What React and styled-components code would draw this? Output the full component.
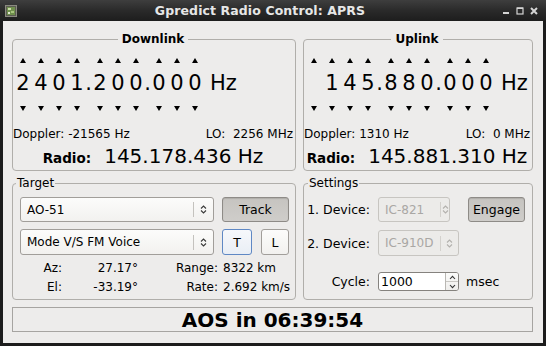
import React from 'react';
import styled, { createGlobalStyle } from 'styled-components';

const GlobalStyle = createGlobalStyle`
  html, body { margin: 0; padding: 0; background: #1c1c1c; }
  body { font-family: "DejaVu Sans", "Noto Sans", sans-serif; font-size: 12px; color: #000; }
`;

const Window = styled.div`
  width: 546px;
  height: 346px;
  display: flex;
  flex-direction: column;
  background: #1c1c1c;
`;

const TitleBar = styled.div`
  height: 21px;
  flex: none;
  display: flex;
  align-items: center;
  background: linear-gradient(#3e3e3e 0%, #2a2a2a 50%, #1d1d1d 100%);
  color: #e6e6e6;
`;

const AppIcon = styled.svg`
  flex: none;
  margin: 0 3px 0 5px;
`;

const Title = styled.div`
  flex: 1;
  text-align: center;
  font-weight: bold;
  font-size: 12.5px;
  letter-spacing: 0.1px;
`;

const WinButtons = styled.div`
  display: flex;
  align-items: center;
  gap: 6px;
  padding: 0 8px 0 2px;
`;

const Client = styled.div`
  flex: 1;
  margin: 0 3px 3px;
  background: #edeceb;
  display: grid;
  grid-template-columns: 284px 230px;
  grid-template-rows: 140px 125px 28px;
  column-gap: 7px;
  row-gap: 4px;
  padding: 10px 10px 0 9px;
`;

const Frame = styled.fieldset`
  margin: 0;
  min-width: 0;
  box-sizing: border-box;
  border: 1px solid #b0aeaa;
  border-radius: 4px;
  padding: 0 ${p => p.$pr}px 0 ${p => p.$pl}px;
  display: flex;
  flex-direction: column;
`;

const Legend = styled.legend`
  line-height: 16px;
  font-size: 12px;
  padding: 0 ${p => (p.$center ? 4 : 1)}px;
  font-weight: ${p => (p.$center ? 'bold' : 'normal')};
  margin: ${p => (p.$center ? '0 auto' : `0 0 0 ${p.$ml}px`)};
`;

/* frequency knob */
const KnobRow = styled.div`
  display: flex;
  align-items: flex-start;
  margin: 8px 0 0 1px;
`;

const DigitCol = styled.div`
  width: 18px;
  display: flex;
  flex-direction: column;
  align-items: center;
`;

const ArrowBox = styled.div`
  height: 10px;
  display: flex;
  align-items: center;
  justify-content: center;
  margin-top: ${p => p.$mt || 0}px;
`;

const Tri = styled.span`
  width: 0;
  height: 0;
  border-left: 3px solid transparent;
  border-right: 3px solid transparent;
  ${p => (p.$down ? 'border-top' : 'border-bottom')}: 5px solid #000;
`;

const Digit = styled.div`
  font-size: 21px;
  line-height: 26px;
  height: 26px;
  margin-top: 5px;
`;

const Dot = styled.div`
  width: 5px;
  display: flex;
  justify-content: center;
  font-size: 21px;
  line-height: 26px;
  margin-top: 15px;
`;

const Unit = styled.div`
  font-size: 21px;
  line-height: 26px;
  margin: 15px 0 0 6px;
`;

const InfoLine = styled.div`
  display: flex;
  justify-content: space-between;
  line-height: 16px;
  margin-top: 13px;
`;

const RadioLine = styled.div`
  display: flex;
  justify-content: center;
  align-items: baseline;
  gap: 13px;
  height: 24px;
  line-height: 24px;
  margin-top: 2px;
`;

const RadioLabel = styled.span`
  font-weight: bold;
  font-size: 13.5px;
`;

const RadioValue = styled.span`
  font-size: 20px;
`;

/* target */
const Controls = styled.div`
  display: grid;
  grid-template-columns: ${p => p.$cols};
  grid-template-rows: 25px 26px;
  column-gap: ${p => p.$gap}px;
  row-gap: 7px;
  margin-top: 6px;
  align-items: center;
`;

const ComboBox = styled.div`
  height: ${p => p.$h || 25}px;
  width: ${p => (p.$w ? `${p.$w}px` : 'auto')};
  box-sizing: border-box;
  border: 1px solid ${p => (p.$off ? '#c7c5c1' : '#a19e9a')};
  border-radius: 3px;
  background: ${p => (p.$off ? '#ecebe9' : 'linear-gradient(#fcfcfb, #f2f1ef)')};
  color: ${p => (p.$off ? '#a9a7a4' : '#000')};
  display: grid;
  grid-template-columns: ${p => p.$text}px 1px 1fr;
  align-items: center;
  overflow: hidden;
`;

const ComboText = styled.span`
  padding-left: 6px;
  white-space: nowrap;
  overflow: hidden;
`;

const ComboSep = styled.span`
  height: 15px;
  background: ${p => (p.$off ? '#d3d1cd' : '#c4c2be')};
`;

const ChevronCell = styled.span`
  display: flex;
  justify-content: center;
`;

const Button = styled.div`
  height: ${p => p.$h || 25}px;
  width: ${p => (p.$w ? `${p.$w}px` : 'auto')};
  box-sizing: border-box;
  border-radius: 3px;
  display: flex;
  align-items: center;
  justify-content: center;
  border: 1px solid ${p => (p.$active ? '#8e8b87' : p.$focus ? '#5f88c4' : '#a19e9a')};
  background: ${p =>
    p.$active
      ? 'linear-gradient(#c6c4c0, #cfcdca)'
      : p.$focus
      ? 'linear-gradient(#f6f8fb, #e9eef5)'
      : 'linear-gradient(#fcfcfb, #f2f1ef)'};
  box-shadow: ${p => (p.$active ? 'inset 0 1px 1px rgba(0,0,0,0.12)' : 'none')};
  font-size: 12.5px;
`;

const ToggleRow = styled.div`
  display: flex;
  gap: 9px;
`;

const Readout = styled.div`
  display: grid;
  grid-template-columns: 42px 76px 80px auto;
  grid-auto-rows: 19px;
  align-items: center;
  margin-top: 3px;
  font-size: 12px;
`;

const Cell = styled.span`
  text-align: ${p => (p.$left ? 'left' : 'right')};
  padding-left: ${p => (p.$left ? 5 : 0)}px;
  white-space: nowrap;
`;

/* settings */
const SetRow = styled.div`
  display: grid;
  grid-template-columns: 65px auto;
  column-gap: 8px;
  align-items: center;
  height: ${p => p.$h}px;
  margin-top: ${p => p.$mt}px;
`;

const SetLabel = styled.span`
  text-align: right;
  white-space: nowrap;
  font-size: 12.5px;
`;

const Inline = styled.div`
  display: flex;
  align-items: center;
  gap: ${p => p.$gap}px;
`;

const Spin = styled.div`
  width: 81px;
  height: 19px;
  box-sizing: border-box;
  border: 1px solid #85827e;
  border-radius: 3px;
  background: #fff;
  display: flex;
  overflow: hidden;
`;

const SpinText = styled.span`
  flex: 1;
  padding-left: 2px;
  line-height: 17px;
  font-size: 12.5px;
`;

const SpinButtons = styled.div`
  width: 12px;
  border-left: 1px solid #b9b7b3;
  display: flex;
  flex-direction: column;
  background: linear-gradient(#fbfbfa, #efeeec);
`;

const SpinHalf = styled.div`
  flex: 1;
  display: flex;
  align-items: center;
  justify-content: center;
  border-top: ${p => (p.$lower ? '1px solid #c9c7c3' : 'none')};
`;

const Unitless = styled.span`
  font-size: 12.5px;
`;

const Countdown = styled.div`
  grid-column: 1 / 3;
  margin-top: 3px;
  border: 1px solid #a6a4a1;
  display: flex;
  align-items: center;
  justify-content: center;
  font-size: 20px;
  font-weight: bold;
`;

const Chevrons = ({ color = '#3a3a3a' }) => (
  <svg width="7" height="11" viewBox="0 0 7 11">
    <path d="M1 4.5 L3.5 2 L6 4.5 M1 6.5 L3.5 9 L6 6.5" fill="none" stroke={color} strokeWidth="1.1" />
  </svg>
);

const Combo = ({ label, text, w, h, off }) => (
  <ComboBox $text={text} $w={w} $h={h} $off={off}>
    <ComboText>{label}</ComboText>
    <ComboSep $off={off} />
    <ChevronCell>
      <Chevrons color={off ? '#b3b1ad' : '#3a3a3a'} />
    </ChevronCell>
  </ComboBox>
);

const Knob = ({ digits }) => (
  <KnobRow>
    {digits.split('').map((d, i) => (
      <React.Fragment key={i}>
        {(i === 4 || i === 7) && <Dot>.</Dot>}
        <DigitCol>
          <ArrowBox>
            <Tri />
          </ArrowBox>
          <Digit>{d === ' ' ? '\u00a0' : d}</Digit>
          <ArrowBox $mt={7}>
            <Tri $down />
          </ArrowBox>
        </DigitCol>
      </React.Fragment>
    ))}
    <Unit>Hz</Unit>
  </KnobRow>
);

const LinkPanel = ({ title, digits, doppler, lo, radio }) => (
  <Frame $pl={0} $pr={2}>
    <Legend $center>{title}</Legend>
    <Knob digits={digits} />
    <InfoLine>
      <span>Doppler: {doppler}</span>
      <span>LO:&nbsp; {lo}</span>
    </InfoLine>
    <RadioLine>
      <RadioLabel>Radio:</RadioLabel>
      <RadioValue>{radio}</RadioValue>
    </RadioLine>
  </Frame>
);

const App = () => (
  <>
    <GlobalStyle />
    <Window>
      <TitleBar>
        <AppIcon width="12" height="12" viewBox="0 0 12 12">
          <rect x="0.5" y="0.5" width="11" height="11" fill="#5b5b52" stroke="#8a8a80" />
          <rect x="2" y="2" width="8" height="8" fill="#6f8f4c" />
          <rect x="3" y="3" width="3" height="2" fill="#c9dca8" />
          <rect x="6" y="6" width="3" height="2" fill="#a8c47e" />
          <rect x="3" y="7" width="2" height="2" fill="#dfe9cf" />
        </AppIcon>
        <Title>Gpredict Radio Control: APRS</Title>
        <WinButtons>
          <svg width="8" height="8" viewBox="0 0 8 8">
            <rect x="1" y="5" width="6" height="2" fill="#d4d4d4" />
          </svg>
          <svg width="8" height="8" viewBox="0 0 8 8">
            <rect x="1" y="1" width="6" height="6" fill="none" stroke="#d4d4d4" strokeWidth="1.2" />
            <rect x="1" y="0.5" width="6" height="1.5" fill="#d4d4d4" />
          </svg>
          <svg width="8" height="8" viewBox="0 0 8 8">
            <path d="M1 1 L7 7 M7 1 L1 7" stroke="#d4d4d4" strokeWidth="2" />
          </svg>
        </WinButtons>
      </TitleBar>

      <Client>
        <LinkPanel
          title="Downlink"
          digits="2401200000"
          doppler="-21565 Hz"
          lo="2256 MHz"
          radio="145.178.436 Hz"
        />
        <LinkPanel
          title="Uplink"
          digits=" 145880000"
          doppler="1310 Hz"
          lo="0 MHz"
          radio="145.881.310 Hz"
        />

        <Frame $pl={7} $pr={6}>
          <Legend $ml={-4}>Target</Legend>
          <Controls $cols="194px 67px" $gap={8}>
            <Combo label="AO-51" text={172} />
            <Button $active>Track</Button>
            <Combo label="Mode V/S FM Voice" text={172} h={26} />
            <ToggleRow>
              <Button $focus $w={30} $h={26}>T</Button>
              <Button $w={28} $h={26}>L</Button>
            </ToggleRow>
          </Controls>
          <Readout>
            <Cell>Az:</Cell>
            <Cell>27.17°</Cell>
            <Cell>Range:</Cell>
            <Cell $left>8322 km</Cell>
            <Cell>El:</Cell>
            <Cell>-33.19°</Cell>
            <Cell>Rate:</Cell>
            <Cell $left>2.692 km/s</Cell>
          </Readout>
        </Frame>

        <Frame $pl={1} $pr={6}>
          <Legend $ml={3}>Settings</Legend>
          <SetRow $h={25} $mt={6}>
            <SetLabel>1. Device:</SetLabel>
            <Inline $gap={18}>
              <Combo label="IC-821" text={61} w={72} off />
              <Button $active $w={57}>Engage</Button>
            </Inline>
          </SetRow>
          <SetRow $h={26} $mt={8}>
            <SetLabel>2. Device:</SetLabel>
            <Inline $gap={0}>
              <Combo label="IC-910D" text={61} w={81} h={26} off />
            </Inline>
          </SetRow>
          <SetRow $h={19} $mt={16}>
            <SetLabel>Cycle:</SetLabel>
            <Inline $gap={7}>
              <Spin>
                <SpinText>1000</SpinText>
                <SpinButtons>
                  <SpinHalf>
                    <svg width="7" height="5" viewBox="0 0 7 5">
                      <path d="M1 4 L3.5 1.3 L6 4" fill="none" stroke="#333" strokeWidth="1.1" />
                    </svg>
                  </SpinHalf>
                  <SpinHalf $lower>
                    <svg width="7" height="5" viewBox="0 0 7 5">
                      <path d="M1 1 L3.5 3.7 L6 1" fill="none" stroke="#333" strokeWidth="1.1" />
                    </svg>
                  </SpinHalf>
                </SpinButtons>
              </Spin>
              <Unitless>msec</Unitless>
            </Inline>
          </SetRow>
        </Frame>

        <Countdown>AOS in 06:39:54</Countdown>
      </Client>
    </Window>
  </>
);

export default App;
